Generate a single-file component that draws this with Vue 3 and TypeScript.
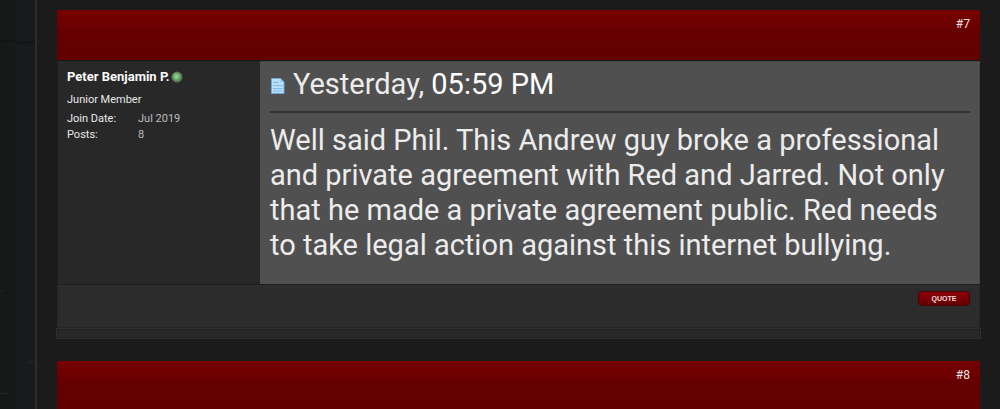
<script setup lang="ts">
interface Field {
  label: string
  value: string
}

interface Post {
  id: number
  author: string
  title: string
  fields: Field[]
  day: string
  time: string
  message: string
}

const post: Post = {
  id: 7,
  author: 'Peter Benjamin P.',
  title: 'Junior Member',
  fields: [
    { label: 'Join Date:', value: 'Jul 2019' },
    { label: 'Posts:', value: '8' },
  ],
  day: 'Yesterday,',
  time: '05:59 PM',
  message:
    'Well said Phil. This Andrew guy broke a professional and private agreement with Red and Jarred. Not only that he made a private agreement public. Red needs to take legal action against this internet bullying.',
}
const nextId = 8
</script>

<template>
  <div class="page">
    <div class="backdrop" aria-hidden="true">
      <svg viewBox="0 0 35 409" preserveAspectRatio="xMinYMin slice">
        <path d="M0 41L10 41L22 43L35 42" fill="none" stroke="#0f1011" />
        <path d="M0 291H3M0 393L8 394M28 362H35" fill="none" stroke="#24292b" />
      </svg>
    </div>
    <main class="thread">
      <article class="post">
        <header class="bar">
          <a :id="`post${post.id}`" class="permalink" :href="`#post${post.id}`">#{{ post.id }}</a>
        </header>
        <div class="body">
          <aside class="user">
            <div class="name-row">
              <a class="name" href="#member">{{ post.author }}</a>
              <svg class="status" viewBox="0 0 12 12" role="img" aria-label="Online">
                <defs>
                  <radialGradient id="online" cx="45%" cy="45%" r="55%">
                    <stop offset="0" stop-color="#9bdc96" />
                    <stop offset="0.55" stop-color="#6fb36c" />
                    <stop offset="1" stop-color="#4f7a50" />
                  </radialGradient>
                </defs>
                <circle cx="6" cy="6" r="5.6" fill="#566257" />
                <circle cx="6" cy="6" r="4.7" fill="url(#online)" />
              </svg>
            </div>
            <p class="rank">{{ post.title }}</p>
            <dl class="stats">
              <template v-for="field in post.fields" :key="field.label">
                <dt>{{ field.label }}</dt>
                <dd>{{ field.value }}</dd>
              </template>
            </dl>
          </aside>
          <section class="content">
            <div class="date">
              <svg class="doc" viewBox="0 0 15 16" aria-hidden="true">
                <path d="M1.5 .5H10.5L14 4V15.5H1.5Z" fill="#b9e0f8" stroke="#6aa9db" />
                <path d="M10.5 .5V4H14Z" fill="#8cc4ec" />
                <path d="M3 4.5H9M3 7.5H12.5M3 10.5H12.5M3 13H12.5" stroke="#7db9e4" />
              </svg>
              <span>{{ post.day }} <span class="time">{{ post.time }}</span></span>
            </div>
            <p class="message">{{ post.message }}</p>
          </section>
        </div>
        <footer class="foot">
          <button class="quote" type="button">QUOTE</button>
        </footer>
        <div class="strip"></div>
      </article>
      <article class="post">
        <header class="bar">
          <a :id="`post${nextId}`" class="permalink" :href="`#post${nextId}`">#{{ nextId }}</a>
        </header>
      </article>
    </main>
  </div>
</template>

<style>
body {
  margin: 0;
  background: #1b1b1b;
}
</style>

<style scoped>
.page {
  display: flex;
  height: 100vh;
  overflow: hidden;
  font-family: Roboto, sans-serif;
  font-size: 11px;
  color: #e8e8e8;
}
.backdrop {
  flex: 0 0 35px;
  background: linear-gradient(90deg, #171818, #181b1d);
}
.backdrop svg {
  display: block;
  width: 100%;
  height: 100%;
}
.thread {
  box-sizing: border-box;
  flex: 1;
  min-width: 0;
  padding: 10px 20px 0;
  border-left: 2px solid #2d2d2d;
  background: #1b1b1b;
}
.post {
  margin-bottom: 22px;
}
.bar {
  display: flex;
  justify-content: flex-end;
  box-sizing: border-box;
  height: 50px;
  padding: 6px 10px;
  background: linear-gradient(#780000, #720000 8px, #640000 24px, #620000);
}
.permalink {
  height: 16px;
  font-size: 12px;
  line-height: 16px;
  color: #f0e4e4;
  text-decoration: none;
}
.body {
  display: flex;
  border-top: 1px solid #171717;
  border-bottom: 1px solid #1d1d1d;
}
.user {
  box-sizing: border-box;
  flex: 0 0 203px;
  padding: 8px 9px;
  border-left: 1px solid #222;
  background: #282828;
}
.name-row {
  display: flex;
  align-items: center;
  gap: 1px;
  height: 16px;
}
.name {
  font-size: 13px;
  font-weight: 700;
  line-height: 16px;
  color: #fafafa;
  text-decoration: none;
}
.status {
  width: 12px;
  height: 12px;
}
.rank {
  margin: 7px 0 3px;
  line-height: 16px;
}
.stats {
  display: grid;
  grid-template-columns: 71px 1fr;
  margin: 0;
  line-height: 16px;
}
.stats dd {
  margin: 0;
  color: #bdbdbd;
}
.content {
  flex: 1;
  min-width: 0;
  padding: 0 9px 21px 10px;
  border-top: 1px solid #464646;
  border-right: 1px solid #464646;
  background: #505050;
  font-size: 29px;
  line-height: 35px;
  color: #ececec;
}
.date {
  display: flex;
  align-items: center;
  gap: 8px;
  box-sizing: border-box;
  height: 51px;
  padding-bottom: 4px;
  border-bottom: 2px solid #303030;
}
.doc {
  width: 15px;
  height: 16px;
  margin-top: 2px;
}
.time {
  color: #fff;
}
.message {
  margin: 10px 0 0;
}
.foot {
  display: flex;
  justify-content: flex-end;
  align-items: flex-start;
  box-sizing: border-box;
  height: 43px;
  padding: 5px 9px;
  border: 1px solid #252525;
  border-top-color: #303030;
  background: #2c2c2c;
}
.quote {
  width: 52px;
  height: 15px;
  padding: 0;
  border: 1px solid #480406;
  border-radius: 4px;
  background: linear-gradient(#8c0008, #7b0005 50%, #620003);
  color: #f3dcdc;
  font-family: "Liberation Sans", sans-serif;
  font-size: 7px;
  font-weight: 700;
  line-height: 12px;
}
.strip {
  box-sizing: border-box;
  height: 11px;
  margin: 0 -1px;
  border: 1px solid #303030;
  background: #282828;
  box-shadow: inset 0 0 0 1px #202020;
}
</style>
